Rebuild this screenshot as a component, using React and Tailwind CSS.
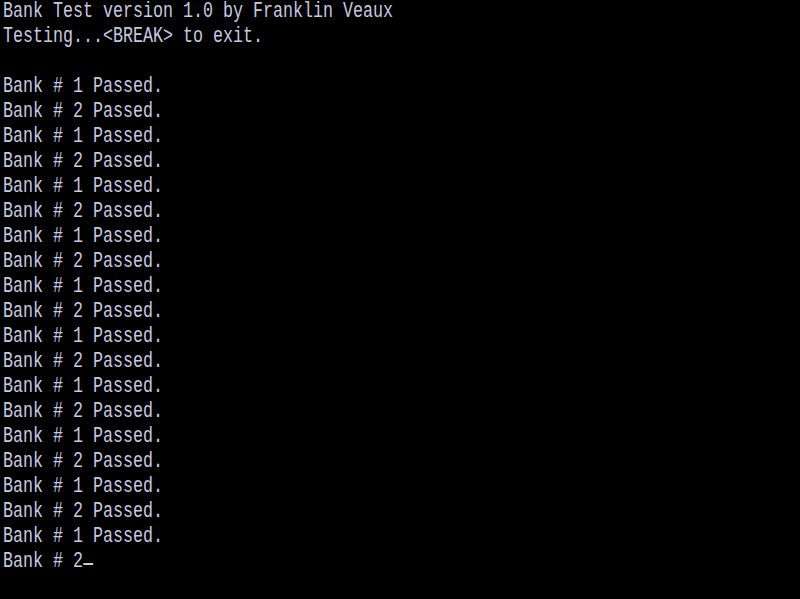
const passed = Array.from({ length: 19 }, (_, i) => `Bank # ${(i % 2) + 1} Passed.`);

const lines = [
  "Bank Test version 1.0 by Franklin Veaux",
  "Testing...<BREAK> to exit.",
  "",
  ...passed,
];

export default function App() {
  return (
    <div className="w-[800px] h-[599px] bg-black overflow-hidden pl-[3px]">
      <div
        className="w-[1056px] -mt-[1px] origin-top-left scale-x-[0.7576] text-[22px] leading-[25px] text-[#c8c8e0]"
        style={{ fontFamily: '"Liberation Mono", "DejaVu Sans Mono", monospace' }}
      >
        {lines.map((l, i) => (
          <div key={i} className="h-[25px] whitespace-pre">
            {l}
          </div>
        ))}
        <div className="h-[25px] whitespace-pre">
          Bank # 2
          <span className="inline-block w-[13px] h-[2px] bg-[#c8c8e0] align-[2px]" />
        </div>
      </div>
    </div>
  );
}
